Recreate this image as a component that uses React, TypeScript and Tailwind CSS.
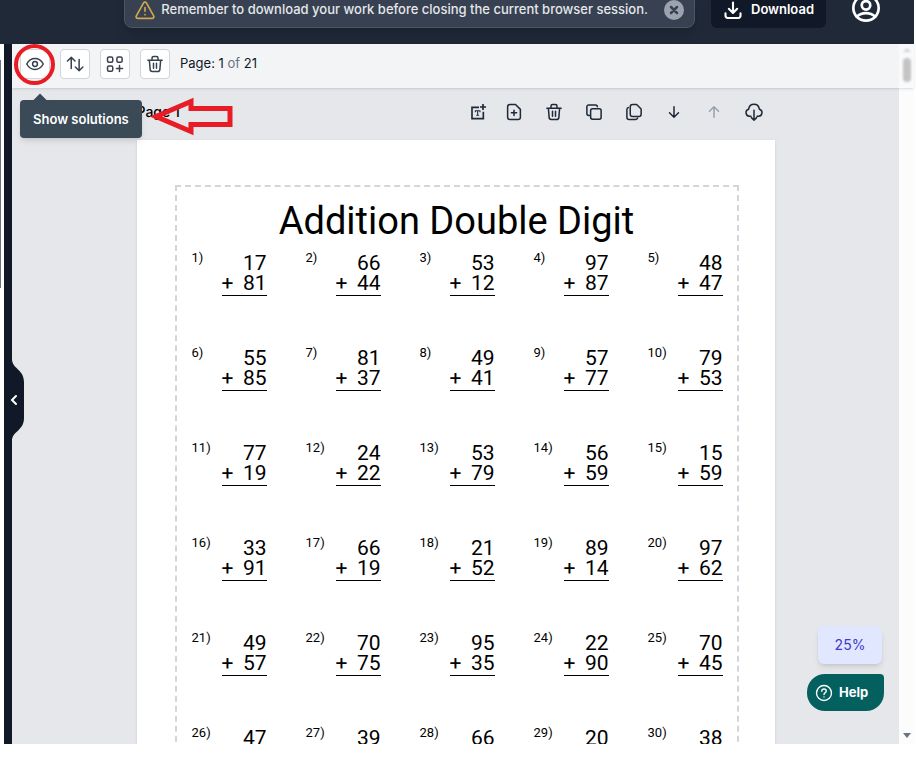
import type { ReactNode } from 'react';

interface IconProps {
  children: ReactNode;
  className?: string;
  strokeWidth?: number;
}

const Icon = ({ children, className = 'size-[18px]', strokeWidth = 2 }: IconProps) => (
  <svg
    viewBox="0 0 24 24"
    fill="none"
    stroke="currentColor"
    strokeWidth={strokeWidth}
    strokeLinecap="round"
    strokeLinejoin="round"
    className={`shrink-0 ${className}`}
    aria-hidden="true"
  >
    {children}
  </svg>
);

const trashIcon = (
  <path d="M2.500 7h19M8 7V4.200C8 3 8.800 2 10 2h4c1.200 0 2 1 2 2.200V7M4.500 7l1 12.200c.1 1.600 1.200 2.800 2.800 2.800h7.400c1.600 0 2.700-1.200 2.800-2.800l1-12.200M10 11v6.500M14 11v6.500" />
);

const toolbarButtons = [
  {
    label: 'Show solutions',
    icon: (
      <>
        <path d="M1 12C3.500 7.300 7.500 4.800 12 4.800S20.500 7.300 23 12C20.500 16.700 16.500 19.200 12 19.200S3.500 16.700 1 12z" />
        <circle cx="12" cy="12" r="3.200" />
      </>
    ),
  },
  {
    label: 'Reorder pages',
    icon: <path d="M7 18V3M2 8l5-5 5 5M17.500 6v15M12.500 16l5 5 5-5" />,
  },
  {
    label: 'Add problems',
    icon: (
      <>
        <rect x="2" y="2.500" width="7" height="7" rx="2" />
        <rect x="14.500" y="2.500" width="7" height="7" rx="2" />
        <rect x="2" y="14.500" width="7" height="7" rx="2" />
        <path d="M18 14v8M14 18h8" />
      </>
    ),
  },
  { label: 'Delete all pages', icon: trashIcon },
];

const pageActions = [
  {
    label: 'Add text',
    small: true,
    icon: (
      <>
        <path d="M13.500 5H3v17h17V11.500M19.500 0v9M15 4.500h9" strokeWidth="2.500" strokeLinecap="butt" strokeLinejoin="miter" />
        <path d="M8 11.500V10h7v1.500M11.500 10v7M10 17h3" strokeWidth="1.600" />
      </>
    ),
  },
  {
    label: 'Add page',
    icon: (
      <path d="M14 2H6.500C5 2 3.500 3.300 3.500 5v14c0 1.700 1.300 3 3 3h11c1.700 0 3-1.300 3-3V8.500zM12 9.500v7M8.500 13h7" />
    ),
  },
  { label: 'Delete page', icon: trashIcon },
  {
    label: 'Duplicate page',
    icon: (
      <>
        <rect x="7.500" y="7.500" width="14" height="14" rx="2.500" />
        <path d="M6 16.500H5A2.500 2.500 0 0 1 2.500 14V5A2.500 2.500 0 0 1 5 2.500h9A2.500 2.500 0 0 1 16.500 5" />
      </>
    ),
  },
  {
    label: 'Copy page',
    icon: (
      <>
        <path d="M15.500 2H10a3 3 0 0 0-3 3v10a3 3 0 0 0 3 3h8.500a3 3 0 0 0 3-3V8z" />
        <path d="M4.500 6A3 3 0 0 0 2.500 9v10a3 3 0 0 0 3 3H14a3 3 0 0 0 2.800-2" />
      </>
    ),
  },
  { label: 'Move down', icon: <path d="M12 5v14M6 13l6 6 6-6" /> },
  { label: 'Move up', icon: <path d="M12 19V5M6 11l6-6 6 6" />, disabled: true },
  {
    label: 'Download page',
    icon: (
      <path d="M8 17.500H6.500A4.700 4.700 0 0 1 4.800 8.300C5.500 4.400 8.400 1.800 12 1.800s6.500 2.600 7.200 6.500a4.700 4.700 0 0 1-1.700 9.200H16M12 9.500V23M8.500 19.500L12 23l3.500-3.500" />
    ),
  },
];

const problems = [
  [17, 81], [66, 44], [53, 12], [97, 87], [48, 47],
  [55, 85], [81, 37], [49, 41], [57, 77], [79, 53],
  [77, 19], [24, 22], [53, 79], [56, 59], [15, 59],
  [33, 91], [66, 19], [21, 52], [89, 14], [97, 62],
  [49, 57], [70, 75], [95, 35], [22, 90], [70, 45],
  [47], [39], [66], [20], [38],
];

const Header = () => (
  <header className="flex h-11 shrink-0 items-end justify-end overflow-hidden bg-[#1f2937] pr-8">
    <div className="mr-4 mb-4 flex h-9 items-center rounded-lg border border-[#4b5563] bg-[#374151] px-2.5 text-[13px] font-medium text-gray-200 shadow-lg">
      <Icon className="mr-1.5 size-5 text-[#d0a84e]">
        <path d="M10.300 3.500L1.600 19c-.8 1.500.2 3 1.800 3h17.200c1.600 0 2.600-1.500 1.800-3L13.700 3.500c-.8-1.300-2.600-1.300-3.400 0zM12 9v4.500M12 17.500v.1" />
      </Icon>
      <span className="whitespace-nowrap">Remember to download your work before closing the current browser session.</span>
      <button type="button" aria-label="Dismiss" className="ml-4 flex size-5 items-center justify-center rounded-full bg-[#9ca3af] text-[#374151]">
        <Icon className="size-3" strokeWidth={5}>
          <path d="M6 6l12 12M18 6L6 18" />
        </Icon>
      </button>
    </div>
    <button type="button" className="mr-6 mb-4 flex h-9 items-center gap-2 rounded-md bg-[#111827] px-3 text-[13px] font-semibold text-white">
      <Icon className="size-5" strokeWidth={2.5}>
        <path d="M12 3v12M7 10.500l5 5 5-5M3 16v3a2.500 2.500 0 0 0 2.500 2.500h13A2.500 2.500 0 0 0 21 19v-3" />
      </Icon>
      Download
    </button>
    <button type="button" aria-label="Account" className="mb-5 text-white">
      <Icon className="size-8">
        <circle cx="12" cy="12" r="9.500" />
        <circle cx="12" cy="10" r="3.200" />
        <path d="M5 18.500c4-3.600 10-3.600 14 0" />
      </Icon>
    </button>
  </header>
);

const Toolbar = () => (
  <div className="relative z-10 flex h-11 shrink-0 items-center bg-[#f3f4f6] pl-2 shadow-sm">
    <div className="flex items-center gap-2.5 pb-1">
      {toolbarButtons.map(({ label, icon }) => (
        <button
          key={label}
          type="button"
          aria-label={label}
          className="flex size-[30px] items-center justify-center rounded-sm border border-gray-300 bg-white text-[#374151]"
        >
          <Icon>{icon}</Icon>
        </button>
      ))}
      <span className="text-[13px] text-gray-900">
        Page: 1 <span className="text-gray-500">of</span> 21
      </span>
    </div>

    {/* Highlight ring around the first button */}
    <div className="absolute top-0 left-0.5 size-[41px] rounded-full border-4 border-[#e81c24]" />

    {/* Tooltip */}
    <div role="tooltip" className="absolute top-14 left-2 rounded-sm bg-[#3a4a57] px-[13px] py-2 text-[13px] leading-[22px] font-semibold whitespace-nowrap text-white shadow-md">
      <span className="absolute -top-1 left-3.5 size-3 rotate-45 bg-[#3a4a57]" />
      Show solutions
    </div>

    {/* Arrow pointing at the tooltip */}
    <svg viewBox="0 0 84 40" className="absolute top-[53px] left-[137px] h-10 w-[84px]" fill="none" stroke="#e81c24" strokeWidth="5" aria-hidden="true">
      <path d="M7 19.500L42 4.500v7h39v16H42v7z" />
    </svg>
  </div>
);

const Problem = ({ number, top, bottom }: { number: number; top: number; bottom?: number }) => (
  <li className="flex h-[95px] items-start justify-between">
    <span className="text-[13px] leading-4">{number})</span>
    <div className="mt-[3px] w-[45px] border-b border-black pb-0.5 text-right text-[21px] leading-5">
      <div>{top}</div>
      {bottom !== undefined && (
        <div className="flex justify-between">
          <span>+</span>
          <span>{bottom}</span>
        </div>
      )}
    </div>
  </li>
);

const Worksheet = () => (
  <section className="mx-auto w-[638px] max-w-full">
    <div className="mb-1 flex h-12 items-center justify-between pr-[9px]">
      <h2 className="text-sm font-medium text-black">Page 1</h2>
      <div className="flex items-center gap-4">
        {pageActions.map(({ label, icon, disabled, small }) => (
          <button
            key={label}
            type="button"
            aria-label={label}
            disabled={disabled}
            className={`flex h-6 items-center justify-center text-[#1f2937] disabled:text-gray-400 ${small ? 'w-4' : 'w-6'}`}
          >
            <Icon className={small ? 'size-4' : 'size-[18px]'}>{icon}</Icon>
          </button>
        ))}
      </div>
    </div>
    <article className="bg-white pt-[45px] pr-9 pl-[38px] font-[Roboto,sans-serif] text-black shadow-sm">
      <div className="border-2 border-dashed border-gray-300 pt-3">
        <h1 className="text-center text-[38px] leading-11">Addition Double Digit</h1>
        <ol className="grid grid-cols-5 gap-x-[39px] pt-[7px] pr-3.5 pl-[15px]">
          {problems.map(([top, bottom], i) => (
            <Problem key={i} number={i + 1} top={top} bottom={bottom} />
          ))}
        </ol>
      </div>
    </article>
  </section>
);

export default function App() {
  return (
    <div className="flex h-screen flex-col overflow-hidden bg-white pr-0.5 pb-6 font-[Inter,sans-serif]">
      <Header />
      <div className="flex min-h-0 flex-1">
        <aside className="w-1 shrink-0 bg-white pt-4">
          <div className="h-[228px] w-px bg-gray-500" />
        </aside>
        <div className="relative z-20 w-2 shrink-0 bg-[#111827]">
          <button type="button" aria-label="Collapse sidebar" className="absolute top-[310px] left-0 h-[92px] w-5 text-white">
            <svg viewBox="0 0 20 92" className="h-[92px] w-5" aria-hidden="true">
              <path d="M8 0v5c0 10 12 10 12 23v36c0 13-12 13-12 23v5H0V0z" fill="#111827" />
              <path d="M12 42l-4 4 4 4" fill="none" stroke="currentColor" strokeWidth="2" strokeLinecap="round" />
            </svg>
          </button>
        </div>
        <main className="relative flex min-w-0 flex-1 flex-col">
          <Toolbar />
          <div className="flex min-h-0 flex-1">
            <div className="min-w-0 flex-1 overflow-hidden bg-[#e5e7eb]">
              <Worksheet />
            </div>
            <div className="flex w-[15px] shrink-0 items-end justify-center bg-[#fcfcfc] pb-1.5">
              <div className="border-x-4 border-t-[5px] border-x-transparent border-t-gray-500" />
            </div>
          </div>

          {/* Page scrollbar */}
          <div className="absolute top-0 right-0 z-10 flex h-11 w-[15px] flex-col items-center gap-1.5 bg-[#f9fafb] pt-1">
            <div className="border-x-4 border-b-4 border-x-transparent border-b-gray-300 blur-[1px]" />
            <div className="h-6 w-2 rounded-sm bg-[#c4c4c4] blur-[1px]" />
          </div>

          {/* Floating controls */}
          <div className="absolute right-[30px] bottom-[33px] flex flex-col items-end gap-2.5">
            <button type="button" className="mr-0.5 h-[38px] w-16 rounded-md bg-[#e0e7ff] text-sm text-[#4338ca] shadow-md">
              25%
            </button>
            <button type="button" className="flex h-[37px] w-[77px] items-center gap-1.5 rounded-[18px] rounded-tr-sm bg-[#03605f] pl-2 text-[13px] font-bold text-white">
              <Icon className="size-[18px]" strokeWidth={1.8}>
                <circle cx="12" cy="12" r="10" />
                <path d="M9 9.500c0-1.700 1.300-2.800 3-2.800s3 1.100 3 2.700c0 2.200-3 2.300-3 4.600M12 17.200v.1" />
              </Icon>
              Help
            </button>
          </div>
        </main>
      </div>
    </div>
  );
}
